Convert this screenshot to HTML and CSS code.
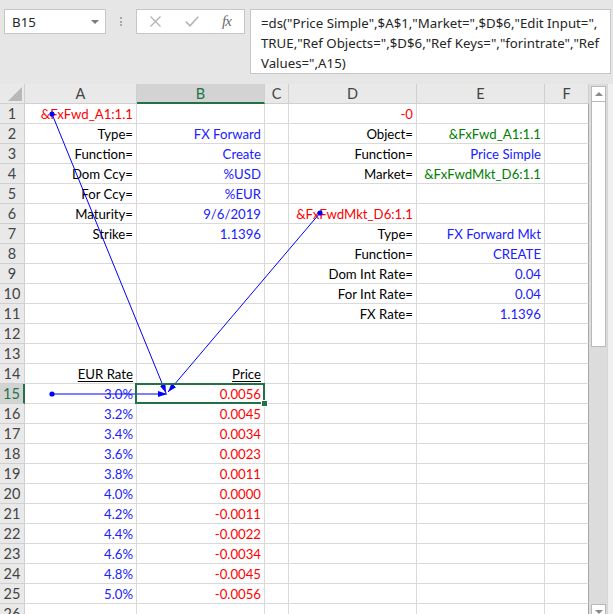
FILE: index.html
```html
<!DOCTYPE html>
<html lang="en">

<head>
    <meta charset="UTF-8">
    <title>FX Forward - Price Simple</title>
    <link rel="stylesheet" href="styles.css">
</head>

<body>
    <div class="toolbar">
        <div class="namebox">
            <span>B15</span>
            <span class="caret"></span>
        </div>
        <div class="grip"><i></i><i></i><i></i></div>
        <div class="fxbox">
            <svg class="ico-cancel" width="11" height="11" viewBox="0 0 11 11">
                <path d="M0.5 0.5 L10.5 10.5 M10.5 0.5 L0.5 10.5" stroke="#b3b3b3" stroke-width="1.3" fill="none" />
            </svg>
            <svg class="ico-enter" width="14" height="11" viewBox="0 0 14 11">
                <path d="M0.8 5.5 L5 9.8 L13.2 0.8" stroke="#b3b3b3" stroke-width="1.6" fill="none" />
            </svg>
            <span class="fx">fx</span>
        </div>
        <div class="formula">
            =ds("Price Simple",$A$1,"Market=",$D$6,"Edit Input=",<br>
            TRUE,"Ref Objects=",$D$6,"Ref Keys=","forintrate","Ref<br>
            Values=",A15)
        </div>
    </div>

    <div class="workarea">
        <div class="sheet" id="sheet">
            <!-- cells are filled in by the script below -->
        </div>
        <div class="vscroll">
            <div class="sb-btn up"></div>
            <div class="sb-thumb"></div>
            <div class="sb-track"></div>
            <div class="sb-btn down"></div>
        </div>
        <div class="edge"></div>
    </div>

    <!-- trace precedents arrows -->
    <svg class="arrows" width="613" height="614" viewBox="0 0 613 614">
        <defs>
            <marker id="head" markerUnits="userSpaceOnUse" markerWidth="9" markerHeight="6" refX="9" refY="3" orient="auto">
                <path d="M0 0 L9 3 L0 6 z" fill="#0000ff" />
            </marker>
        </defs>
        <line x1="52" y1="114" x2="166" y2="393" stroke="#0000ff" stroke-width="1" marker-end="url(#head)" />
        <line x1="320" y1="213" x2="168" y2="392" stroke="#0000ff" stroke-width="1" marker-end="url(#head)" />
        <line x1="52" y1="394" x2="167" y2="394" stroke="#0000ff" stroke-width="1" marker-end="url(#head)" />
        <circle cx="52" cy="114" r="2.6" fill="#0000ff" />
        <circle cx="320" cy="213" r="2.6" fill="#0000ff" />
        <circle cx="52" cy="394" r="2.6" fill="#0000ff" />
    </svg>

    <script>
        const cols = ['A', 'B', 'C', 'D', 'E', 'F'];

        // row -> { column: [text, colour class] }
        const cells = {
            1: { A: ['&FxFwd_A1:1.1', 'red'], D: ['-0', 'red'] },
            2: { A: ['Type='], B: ['FX Forward', 'blue'], D: ['Object='], E: ['&FxFwd_A1:1.1', 'green'] },
            3: { A: ['Function='], B: ['Create', 'blue'], D: ['Function='], E: ['Price Simple', 'blue'] },
            4: { A: ['Dom Ccy='], B: ['%USD', 'blue'], D: ['Market='], E: ['&FxFwdMkt_D6:1.1', 'green'] },
            5: { A: ['For Ccy='], B: ['%EUR', 'blue'] },
            6: { A: ['Maturity='], B: ['9/6/2019', 'blue'], D: ['&FxFwdMkt_D6:1.1', 'red'] },
            7: { A: ['Strike='], B: ['1.1396', 'blue'], D: ['Type='], E: ['FX Forward Mkt', 'blue'] },
            8: { D: ['Function='], E: ['CREATE', 'blue'] },
            9: { D: ['Dom Int Rate='], E: ['0.04', 'blue'] },
            10: { D: ['For Int Rate='], E: ['0.04', 'blue'] },
            11: { D: ['FX Rate='], E: ['1.1396', 'blue'] },
            14: { A: ['EUR Rate', 'under'], B: ['Price', 'under'] }
        };

        const rates = ['3.0%', '3.2%', '3.4%', '3.6%', '3.8%', '4.0%', '4.2%', '4.4%', '4.6%', '4.8%', '5.0%'];
        const prices = ['0.0056', '0.0045', '0.0034', '0.0023', '0.0011', '0.0000', '-0.0011', '-0.0022', '-0.0034', '-0.0045', '-0.0056'];
        rates.forEach((rate, i) => {
            cells[15 + i] = { A: [rate, 'blue'], B: [prices[i], 'red'] };
        });

        const selected = { row: 15, col: 'B' };

        function addCell(sheet, className, text) {
            const div = document.createElement('div');
            div.className = className;
            if (text) div.textContent = text;
            sheet.appendChild(div);
        }

        function buildSheet() {
            const sheet = document.getElementById('sheet');

            addCell(sheet, 'corner', '');
            cols.forEach(c => {
                addCell(sheet, 'colhead' + (c === selected.col ? ' active' : ''), c);
            });

            for (let r = 1; r <= 26; r++) {
                addCell(sheet, 'rowhead' + (r === selected.row ? ' active' : ''), String(r));
                cols.forEach(c => {
                    const entry = cells[r] && cells[r][c];
                    let cls = 'cell';
                    if (c === 'F') cls += ' last';
                    if (entry && entry[1]) cls += ' ' + entry[1];
                    if (r === selected.row && c === selected.col) cls += ' sel';
                    addCell(sheet, cls, entry ? entry[0] : '');
                });
            }
        }

        buildSheet();
    </script>
</body>

</html>
```

FILE: styles.css
```css
body {
    margin: 0;
    width: 613px;
    height: 614px;
    overflow: hidden;
    position: relative;
    background: #e6e6e6;
    font-family: Lato, "Liberation Sans", sans-serif;
}

/* formula bar */

.toolbar {
    height: 84px;
    box-sizing: border-box;
    padding: 9px 2px 0 4px;
    display: flex;
    align-items: flex-start;
    font-family: "Noto Sans", "Liberation Sans", sans-serif;
    color: #262626;
}

.namebox {
    width: 102px;
    height: 25px;
    box-sizing: border-box;
    background: #ffffff;
    border: 1px solid #c6c6c6;
    display: flex;
    align-items: center;
    justify-content: space-between;
    padding: 0 6px 0 7px;
    font-size: 13.3px;
}

.caret {
    width: 0;
    height: 0;
    border-left: 4px solid transparent;
    border-right: 4px solid transparent;
    border-top: 4px solid #7a7a7a;
}

.grip {
    width: 30px;
    height: 25px;
    display: flex;
    flex-direction: column;
    align-items: center;
    justify-content: center;
    gap: 1.5px;
}

.grip i {
    display: block;
    width: 2px;
    height: 2px;
    background: #a8a8a8;
}

.fxbox {
    width: 109px;
    height: 25px;
    box-sizing: border-box;
    background: #ffffff;
    border: 1px solid #c6c6c6;
    display: flex;
    align-items: center;
    padding-left: 13px;
}

.ico-enter {
    margin-left: 24px;
}

.fx {
    margin-left: 23px;
    font-family: "Liberation Serif", serif;
    font-style: italic;
    font-size: 15px;
    letter-spacing: -1px;
    color: #6b6b6b;
}

.formula {
    flex: 1;
    height: 65px;
    margin-left: 5px;
    box-sizing: border-box;
    background: #ffffff;
    border: 1px solid #c6c6c6;
    padding: 3px 0 0 10px;
    font-size: 13.25px;
    line-height: 20px;
    white-space: nowrap;
    overflow: hidden;
}

/* sheet area */

.workarea {
    display: flex;
    height: 530px;
}

.sheet {
    width: 589px;
    display: grid;
    grid-template-columns: 25px 112px 128px 24px 128px 128px 44px;
    grid-auto-rows: 20px;
    align-content: start;
    background: #ffffff;
    font-size: 13.2px;
}

.corner,
.colhead,
.rowhead {
    background: #e9e9e9;
    color: #444444;
    box-sizing: border-box;
    border-right: 1px solid #cfcfcf;
    border-bottom: 1px solid #cfcfcf;
    text-align: center;
    font-size: 14.5px;
    line-height: 20px;
}

.corner {
    position: relative;
}

.corner::after {
    content: "";
    position: absolute;
    right: 2px;
    bottom: 2px;
    width: 14px;
    height: 14px;
    background: #b8b8b8;
    clip-path: polygon(100% 0, 100% 100%, 0 100%);
}

.colhead.active {
    background: #d3d3d3;
    color: #217346;
    border-bottom: 2px solid #217346;
}

.rowhead.active {
    background: #d3d3d3;
    color: #217346;
    border-right: 2px solid #217346;
}

.cell {
    box-sizing: border-box;
    border-right: 1px solid #d9d9d9;
    border-bottom: 1px solid #d9d9d9;
    padding: 1px 3px 0;
    text-align: right;
    line-height: 19px;
    white-space: nowrap;
    color: #000000;
}

.cell.last {
    border-right-color: #a6a6a6;
}

.cell.red {
    color: #ff0000;
}

.cell.blue {
    color: #2020ff;
}

.cell.green {
    color: #008000;
}

.cell.under {
    text-decoration: underline;
    text-underline-offset: 2px;
}

.cell.sel {
    position: relative;
    z-index: 2;
}

.cell.sel::before {
    content: "";
    position: absolute;
    top: -1px;
    left: -2px;
    right: -1px;
    bottom: -1px;
    border: 2px solid #217346;
}

.cell.sel::after {
    content: "";
    position: absolute;
    right: -4px;
    bottom: -4px;
    width: 5px;
    height: 5px;
    background: #217346;
    border: 1px solid #ffffff;
}

/* scroll bar */

.vscroll {
    width: 18px;
    box-sizing: border-box;
    padding: 2px 1px 0 2px;
    background: #dcdcdc;
}

.sb-btn {
    height: 16px;
    box-sizing: border-box;
    background: #ffffff;
    border: 1px solid #b9b9b9;
    position: relative;
}

.sb-btn::after {
    content: "";
    position: absolute;
    left: 3px;
    top: 5px;
    border-left: 4px solid transparent;
    border-right: 4px solid transparent;
}

.sb-btn.up::after {
    border-bottom: 4px solid #8a8a8a;
}

.sb-btn.down::after {
    border-top: 4px solid #8a8a8a;
}

.sb-thumb {
    height: 245px;
    box-sizing: border-box;
    background: #ffffff;
    border: 1px solid #b9b9b9;
    border-top: none;
}

.sb-track {
    height: 257px;
}

.edge {
    flex: 1;
    background: #f0f0f0;
    border-left: 1px solid #d6d6d6;
}

.arrows {
    position: absolute;
    left: 0;
    top: 0;
    pointer-events: none;
}
```
